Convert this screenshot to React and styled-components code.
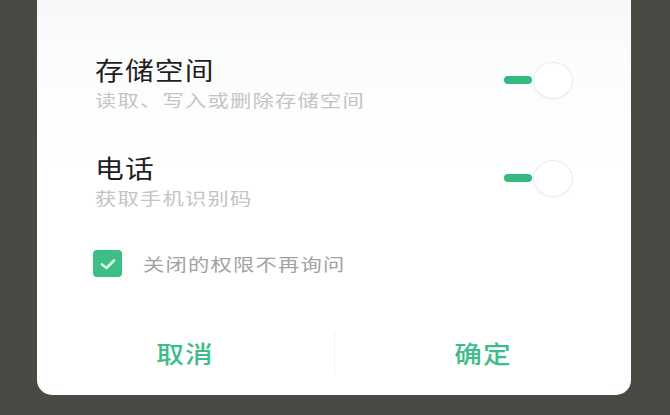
import React from "react";
import styled, { createGlobalStyle } from "styled-components";

const Global = createGlobalStyle`
  html, body {
    margin: 0;
    padding: 0;
    background: #4a4944;
  }
  body {
    font-family: "Noto Sans CJK SC", "Noto Sans", sans-serif;
  }
`;

const perms = [
  { title: "存储空间", desc: "读取、写入或删除存储空间", on: true },
  { title: "电话", desc: "获取手机识别码", on: true },
];

const App = () => {
  return (
    <Screen>
      <Global />
      <Card>
        <List>
          {perms.map(p => (
            <Row key={p.title}>
              <Texts>
                <Title>{p.title}</Title>
                <Desc>{p.desc}</Desc>
              </Texts>
              <Toggle>
                <Track $on={p.on} />
                <Knob />
              </Toggle>
            </Row>
          ))}
        </List>

        <CheckRow>
          <Box>
            <svg width="18" height="14" viewBox="0 0 18 14">
              <polyline
                points="3,7.5 7.5,11 15,3.5"
                fill="none"
                stroke="#d4f7e6"
                strokeWidth="2.8"
                strokeLinecap="round"
                strokeLinejoin="round"
              />
            </svg>
          </Box>
          <CheckLabel>关闭的权限不再询问</CheckLabel>
        </CheckRow>

        <Actions>
          <Action>
            <Wide>取消</Wide>
          </Action>
          <Divider />
          <Action>
            <Wide>确定</Wide>
          </Action>
        </Actions>
      </Card>
    </Screen>
  );
};

export default App;

const Screen = styled.div`
  width: 670px;
  height: 415px;
  overflow: hidden;
  padding: 0 39px 0 37px;
  box-sizing: border-box;
`;

const Card = styled.div`
  margin-top: -30px;
  background: linear-gradient(180deg, #f4f7f7 0%, #fbfcfc 20%, #ffffff 45%, #ffffff 100%);
  border-radius: 15px;
  padding-top: 84px;
  display: flex;
  flex-direction: column;
`;

const List = styled.div`
  display: flex;
  flex-direction: column;
  gap: 40px;
`;

const Row = styled.div`
  display: flex;
  align-items: center;
  justify-content: space-between;
  padding: 0 58px 0 58px;
`;

const Texts = styled.div`
  display: flex;
  flex-direction: column;
`;

/* the source shot is stretched sideways, so text is widened with scaleX */
const Title = styled.div`
  font-size: 25px;
  line-height: 30px;
  letter-spacing: 1px;
  color: #1f1f1f;
  transform: scaleX(1.15);
  transform-origin: left center;
`;

const Desc = styled.div`
  margin-top: 4px;
  font-size: 17px;
  line-height: 24px;
  letter-spacing: 1px;
  color: #c4c4c4;
  white-space: nowrap;
  transform: scaleX(1.25);
  transform-origin: left center;
`;

const Toggle = styled.div`
  display: flex;
  align-items: center;
  margin-top: -6px;
`;

const Track = styled.div`
  width: 28px;
  height: 8px;
  border-radius: 4px;
  background: ${({ $on }) => ($on ? "#35b97f" : "#dcdcdc")};
`;

const Knob = styled.div`
  width: 40px;
  height: 37px;
  margin-left: 1px;
  border-radius: 50%;
  background: #ffffff;
  border: 1.5px solid #e9ebea;
  box-sizing: border-box;
  box-shadow: 0 1px 2px rgba(0, 0, 0, 0.04);
`;

const CheckRow = styled.div`
  display: flex;
  align-items: center;
  gap: 21px;
  margin-top: 40px;
  padding-left: 56px;
`;

const Box = styled.div`
  width: 29px;
  height: 27px;
  border-radius: 4px;
  background: #3cbf86;
  display: flex;
  align-items: center;
  justify-content: center;
`;

const CheckLabel = styled.div`
  font-size: 17px;
  line-height: 24px;
  letter-spacing: 1px;
  color: #a2a2a2;
  white-space: nowrap;
  transform: scaleX(1.25);
  transform-origin: left center;
`;

const Actions = styled.div`
  margin-top: 33px;
  height: 85px;
  display: flex;
  align-items: center;
`;

const Action = styled.div`
  flex: 1;
  display: flex;
  justify-content: center;
`;

const Wide = styled.span`
  font-size: 24px;
  letter-spacing: 1px;
  font-weight: 500;
  color: #3dbd8a;
  transform: scaleX(1.15);
`;

const Divider = styled.div`
  width: 1px;
  height: 42px;
  background: #f1f2f2;
`;
